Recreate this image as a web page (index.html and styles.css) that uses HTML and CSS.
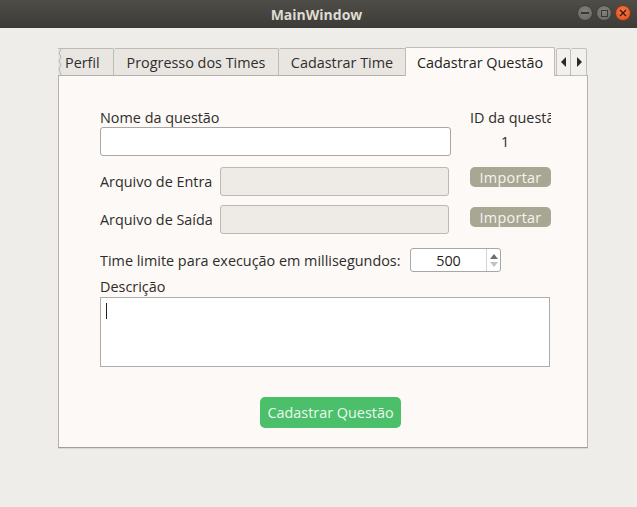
FILE: index.html
```html
<!DOCTYPE html>
<html>
<head>
<meta charset="utf-8">
<link rel="stylesheet" href="styles.css">
</head>
<body>
<div class="titlebar">
  <div class="title">MainWindow</div>
  <div class="wbtns">
    <span class="wb min"><span class="dash"></span></span>
    <span class="wb max"><span class="sq"></span></span>
    <span class="wb close">
      <svg width="8" height="8" viewBox="0 0 8 8"><path d="M1 1L7 7M7 1L1 7" stroke="#3a1a0a" stroke-width="1.4"/></svg>
    </span>
  </div>
</div>
<div class="client">
  <div class="tabwidget">
    <div class="tabbar">
      <div class="tab first">
        <svg class="zig" width="5" height="26" viewBox="0 0 5 26"><path d="M3 0L1 4L3 8L1 12L3 16L1 20L3 26" fill="none" stroke="#b8b3ac" stroke-width="1"/></svg>
        Perfil</div>
      <div class="tab">Progresso dos Times</div>
      <div class="tab">Cadastrar Time</div>
      <div class="tab sel">Cadastrar Questão</div>
      <div class="scrollbtns">
        <span class="sb"><svg width="6" height="10" viewBox="0 0 6 10"><path d="M5 0V10L0 5Z" fill="#2a2a2a"/></svg></span>
        <span class="sb"><svg width="6" height="10" viewBox="0 0 6 10"><path d="M1 0V10L6 5Z" fill="#2a2a2a"/></svg></span>
      </div>
    </div>
    <div class="pane">
      <div class="form">
        <div class="row r-label">
          <div class="lbl wide">Nome da questão</div>
          <div class="lbl idlbl">ID da questão</div>
        </div>
        <div class="row r-input">
          <div class="field big"></div>
          <div class="idval">1</div>
        </div>
        <div class="row r-file">
          <div class="lbl flbl">Arquivo de Entrada</div>
          <div class="field dis"></div>
          <div class="imp">Importar</div>
        </div>
        <div class="row r-file r-file2">
          <div class="lbl flbl">Arquivo de Saída</div>
          <div class="field dis"></div>
          <div class="imp imp2">Importar</div>
        </div>
        <div class="row r-time">
          <div class="lbl">Time limite para execução em millisegundos:</div>
          <div class="spin">
            <div class="spinval">500</div>
            <div class="arrows">
              <svg width="8" height="5" viewBox="0 0 8 5"><path d="M0 5L4 0L8 5Z" fill="#6e6e6e"/></svg>
              <svg width="8" height="5" viewBox="0 0 8 5"><path d="M0 0L4 5L8 0Z" fill="#c2c2c2"/></svg>
            </div>
          </div>
        </div>
        <div class="row r-desc">
          <div class="lbl">Descrição</div>
        </div>
        <div class="textarea"><span class="caret"></span></div>
        <div class="row r-btn">
          <div class="green">Cadastrar Questão</div>
        </div>
      </div>
    </div>
  </div>
</div>
</body>
</html>
```
FILE: styles.css
```css
* { box-sizing: border-box; }
html, body { margin: 0; padding: 0; }
body {
  width: 637px; height: 507px; overflow: hidden;
  background: #efedea;
  font-family: "Open Sans", "Noto Sans", sans-serif;
  font-size: 14.4px;
  color: #2e2d2b;
}
.titlebar {
  height: 28px;
  background: linear-gradient(#4f4d48, #3c3b37);
  position: relative;
  display: flex; align-items: center; justify-content: center;
}
.title {
  color: #dfdbd2; font-weight: bold; font-size: 14px;
  font-family: "Open Sans", sans-serif;
  margin-right: 4px;
}
.wbtns {
  position: absolute; right: 6px; top: 5px;
  display: flex; gap: 3px;
}
.wb {
  width: 16px; height: 16px; border-radius: 50%;
  display: flex; align-items: center; justify-content: center;
}
.min, .max {
  background: radial-gradient(circle at 50% 40%, #85837c, #65635e);
  border: 1px solid #3f3e3a;
}
.dash { width: 8px; height: 2px; background: #3a3935; }
.sq { width: 7px; height: 7px; border: 1px solid #3a3935; }
.close {
  background: radial-gradient(circle at 50% 40%, #f27a4a, #df4e1c);
  border: 1px solid #8a3312;
}
.client { padding: 19px 0 0 58px; }
.tabwidget { width: 530px; }
.tabbar {
  height: 29px; display: flex; align-items: flex-end;
  position: relative; z-index: 1;
}
.tab {
  height: 27px;
  background: #e9e6e2;
  border: 1px solid #c0bbb4;
  border-bottom: none;
  border-left: none;
  padding: 0 12px;
  display: flex; align-items: center;
  color: #2f2e2c;
  white-space: nowrap;
  margin-bottom: 1px;
  border-radius: 2px 2px 0 0;
}
.tab.first {
  width: 56px; padding: 0 0 0 7px; border-radius: 0 2px 0 0;
  position: relative;
}
.zig { position: absolute; left: 0; top: 0; }
.tab:nth-child(2) { width: 165px; justify-content: center; }
.tab:nth-child(3) { width: 127px; justify-content: center; }
.tab.sel {
  background: #fcf9f6; height: 29px; margin-bottom: 0;
  width: 150px; justify-content: center;
  border-left: 1px solid #c0bbb4;
  margin-left: -1px;
  color: #242422;
  overflow: hidden;
}
.scrollbtns { display: flex; margin-left: 1px; margin-bottom: 0; height: 28px; }
.sb {
  width: 15px; height: 28px;
  border: 1px solid #c4c0b9; border-radius: 2px;
  background: #f3f1ee;
  display: flex; align-items: center; justify-content: center;
}
.sb + .sb { border-left: none; width: 16px; }
.pane {
  height: 373px;
  margin-top: -1px;
  background: #fcf9f6;
  border: 1px solid #b5b1aa;
  border-bottom-color: #a19d97;
  box-shadow: 0 1px 0 #dcd9d4;
}
.form { padding: 31px 0 0 41px; width: 493px; }
.row { display: flex; align-items: center; }
.lbl { white-space: nowrap; overflow: hidden; }
.r-label { height: 20px; }
.wide { width: 370px; }
.idlbl { width: 81px; }
.r-input { height: 29px; }
.field {
  background: #fff; border: 1px solid #a9a7a3; border-radius: 3px;
  height: 29px;
}
.big { width: 351px; }
.idval { padding-left: 50px; }
.r-file { height: 29px; margin-top: 11px; align-items: flex-start; }
.r-file2 { margin-top: 9px; }
.flbl { width: 112px; margin-right: 8px; height: 29px; line-height: 29px; }
.field.dis { width: 229px; background: #eeebe7; border-color: #bcb9b4; }
.imp {
  width: 81px; height: 20px; margin-left: 21px;
  background: #a8a794; color: #f5f4ee; border-radius: 5px;
  display: flex; align-items: center; justify-content: center;
  font-size: 14.4px; letter-spacing: 0.3px;
}
.imp2 { margin-top: 2px; }
.r-time { height: 24px; margin-top: 14px; }
.r-time .lbl { width: 310px; }
.spin {
  width: 91px; height: 24px; background: #fff;
  border: 1px solid #a9a7a3; border-radius: 3px;
  display: flex;
}
.spinval {
  flex: 1; display: flex; align-items: center; justify-content: center;
  padding-left: 0; color: #1f1f1f;
}
.arrows {
  width: 14px; border-left: 1px solid #d6d4d0;
  display: flex; flex-direction: column; align-items: center; justify-content: center; gap: 3px;
}
.r-desc { height: 20px; margin-top: 4px; }
.textarea {
  width: 450px; height: 70px; margin-top: 1px;
  background: #fff; border: 1px solid #aeaca8;
  position: relative;
}
.caret {
  position: absolute; left: 5px; top: 5px; width: 1px; height: 16px; background: #222;
}
.r-btn { margin-top: 30px; }
.green {
  margin-left: 160px; width: 141px; height: 31px;
  background: #4cbf6b; color: #eaf8ee; border-radius: 5px;
  display: flex; align-items: center; justify-content: center;
  font-size: 14.4px;
}
```
